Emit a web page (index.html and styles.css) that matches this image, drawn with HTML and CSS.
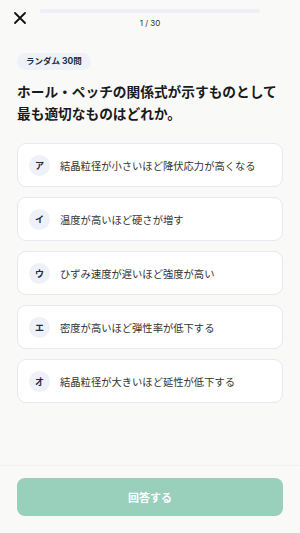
FILE: index.html
```html
<!DOCTYPE html>
<html lang="ja">
<head>
  <meta charset="UTF-8">
  <meta name="viewport" content="width=device-width, initial-scale=1.0">
  <title>クイズ</title>
  <link rel="stylesheet" href="styles.css">
</head>
<body>
  <div class="screen">
    <header class="topbar">
      <button class="close-btn" type="button" aria-label="閉じる">
        <svg width="12" height="12" viewBox="0 0 12 12">
          <path d="M1 1 L11 11 M11 1 L1 11" stroke="#111" stroke-width="1.8" stroke-linecap="round" fill="none"/>
        </svg>
      </button>
      <div class="progress">
        <div class="progress-track"><div class="progress-fill" style="width: 3.3%"></div></div>
        <div class="progress-count">1 / 30</div>
      </div>
    </header>

    <main class="content">
      <span class="badge">ランダム 30問</span>
      <h1 class="question">ホール・ペッチの関係式が示すものとして<br>最も適切なものはどれか。</h1>

      <ul class="options">
        <li class="option"><span class="option-key">ア</span><span class="option-text">結晶粒径が小さいほど降伏応力が高くなる</span></li>
        <li class="option"><span class="option-key">イ</span><span class="option-text">温度が高いほど硬さが増す</span></li>
        <li class="option"><span class="option-key">ウ</span><span class="option-text">ひずみ速度が遅いほど強度が高い</span></li>
        <li class="option"><span class="option-key">エ</span><span class="option-text">密度が高いほど弾性率が低下する</span></li>
        <li class="option"><span class="option-key">オ</span><span class="option-text">結晶粒径が大きいほど延性が低下する</span></li>
      </ul>
    </main>

    <footer class="footer">
      <button class="answer-btn" type="button" disabled>回答する</button>
    </footer>
  </div>
</body>
</html>
```

FILE: styles.css
```css
* {
  box-sizing: border-box;
}
body {
  margin: 0;
  background-color: #f9f9f8;
  font-family: 'Inter', 'Noto Sans CJK JP', sans-serif;
  color: #222;
}
.screen {
  height: 533px;
  display: flex;
  flex-direction: column;
}
.topbar {
  display: flex;
  align-items: flex-start;
  padding: 11px 17px 0 14px;
  height: 40px;
}
.close-btn {
  width: 12px;
  height: 12px;
  padding: 0;
  margin-top: 1px;
  border: none;
  background: none;
  display: flex;
}
.progress {
  margin-left: 14px;
  width: 220px;
}
.progress-track {
  height: 4px;
  border-radius: 2px;
  background-color: #edf1f7;
  margin-top: -2px;
}
.progress-fill {
  height: 100%;
  border-radius: 2px;
  background-color: #edf1f7;
}
.progress-count {
  text-align: center;
  font-size: 8px;
  color: #333;
  margin-top: 5px;
}
.content {
  flex: 1;
  padding: 13px 17px 0;
}
.badge {
  display: inline-block;
  padding: 0 9px;
  height: 17px;
  line-height: 17px;
  border-radius: 9px;
  background-color: #eef2f8;
  color: #1f2a44;
  font-size: 8.5px;
  font-weight: 700;
  vertical-align: top;
}
.question {
  margin: 8px -10px 18px 0;
  font-size: 13.7px;
  line-height: 22px;
  font-weight: 700;
  color: #1a1a1a;
  white-space: nowrap;
}
.options {
  list-style: none;
  margin: 0;
  padding: 0;
  display: flex;
  flex-direction: column;
  gap: 10px;
}
.option {
  display: flex;
  align-items: center;
  height: 44px;
  padding: 0 11px;
  background-color: #fff;
  border: 1px solid #e6e9f0;
  border-radius: 9px;
}
.option-key {
  width: 21px;
  height: 21px;
  border-radius: 50%;
  background-color: #eef2f8;
  display: flex;
  align-items: center;
  justify-content: center;
  font-size: 9px;
  font-weight: 700;
  color: #1f2a44;
  flex-shrink: 0;
}
.option-text {
  margin-left: 10px;
  font-size: 10.3px;
  color: #333;
}
.footer {
  border-top: 1px solid #f1f2f5;
  padding: 12px 17px 17px;
}
.answer-btn {
  width: 100%;
  height: 38px;
  border: none;
  border-radius: 8px;
  background-color: #98d0bc;
  color: #fff;
  font-family: inherit;
  font-size: 11px;
  font-weight: 700;
}
```
